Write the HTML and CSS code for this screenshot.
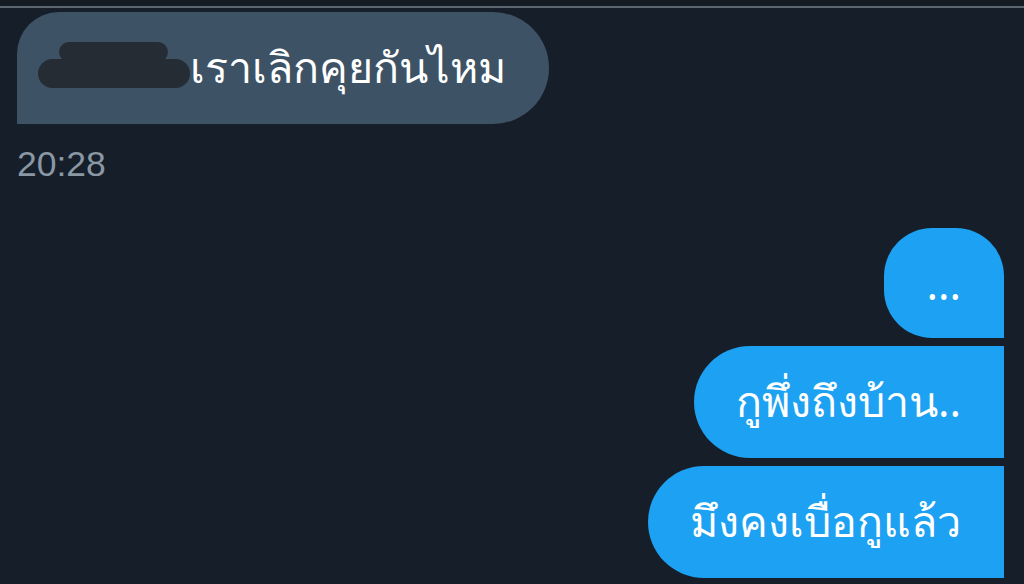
FILE: index.html
```html
<!DOCTYPE html>
<html lang="th">
<head>
<meta charset="utf-8">
<link rel="stylesheet" href="styles.css">
</head>
<body>
<div class="topbar"></div>
<main class="chat">
  <div class="received">
    <div class="bubble in"><span class="redact"></span>เราเลิกคุยกันไหม</div>
    <div class="time">20:28</div>
  </div>
  <div class="sent">
    <div class="bubble out first">...</div>
    <div class="bubble out">กูพึ่งถึงบ้าน..</div>
    <div class="bubble out">มึงคงเบื่อกูแล้ว</div>
  </div>
</main>
</body>
</html>
```
FILE: styles.css
```css
html, body {
  margin: 0;
  padding: 0;
  background: #161f29;
  overflow: hidden;
}
body {
  width: 1024px;
  height: 584px;
  font-family: "Noto Sans", "DejaVu Sans", sans-serif;
  color: #ffffff;
}
.topbar {
  height: 6px;
  border-bottom: 2px solid #5b6671;
  background: #141b23;
}
.chat {
  display: flex;
  flex-direction: column;
  padding: 4px 20px 0 17px;
}
.received {
  display: flex;
  flex-direction: column;
  align-items: flex-start;
}
.bubble {
  box-sizing: border-box;
  height: 112px;
  padding: 0 43px 0 42px;
  display: flex;
  align-items: center;
  font-size: 43px;
  white-space: nowrap;
}
.bubble.in {
  background: #3d5365;
  border-radius: 42px 56px 56px 0;
  padding-left: 21px;
}
.redact {
  position: relative;
  display: inline-block;
  width: 152px;
  height: 29px;
  margin-top: 10px;
  border-radius: 15px;
  background: #262c33;
}
.redact::before {
  content: "";
  position: absolute;
  left: 21px;
  top: -17px;
  width: 109px;
  height: 20px;
  border-radius: 10px;
  background: #262c33;
}
.time {
  margin-top: 20px;
  font-family: "Liberation Sans", Roboto, sans-serif;
  font-size: 35.5px;
  line-height: 40px;
  color: #8a98a5;
}
.sent {
  display: flex;
  flex-direction: column;
  align-items: flex-end;
  gap: 8px;
  margin-top: 44px;
}
.bubble.out {
  background: #1da1f2;
  border-radius: 56px 0 0 56px;
}
.bubble.out.first {
  border-radius: 48px 48px 0 48px;
  height: 110px;
}
```
